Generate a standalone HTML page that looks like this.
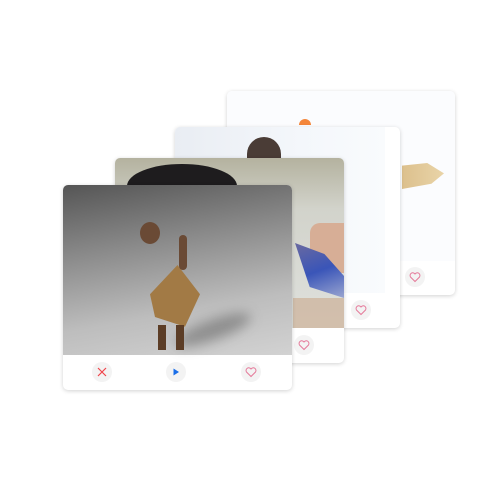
<!DOCTYPE html>
<html><head><style>
body{margin:0;width:500px;height:500px;background:#fff;position:relative;overflow:hidden;font-family:"Liberation Sans",sans-serif}
.c{position:absolute;background:#fff;border-radius:5px;box-shadow:0 1px 4px rgba(0,0,0,.18);overflow:hidden}
.im{position:absolute;left:0;top:0}
.b{position:absolute;width:20px;height:20px;border-radius:50%;background:#f3f3f3}
.b svg{position:absolute;left:4px;top:4px}
</style></head><body>
<div class="c" style="left:227px;top:91px;width:228px;height:204px">
 <div class="im" style="width:228px;height:170px;background:#fbfcfe"></div>
 <div style="position:absolute;left:72px;top:28px;width:12px;height:6px;background:#f4863a;border-radius:6px 6px 0 0"></div>
 <div style="position:absolute;left:175px;top:72px;width:42px;height:26px;background:linear-gradient(90deg,#dcc08d,#e9d4a8);clip-path:polygon(0 10%,60% 0,100% 40%,70% 80%,0 100%)"></div>
 <div class="b" style="left:178px;top:176px"><svg width="12" height="12" viewBox="0 0 12 12"><path d="M6 10.5L1.5 6A2.5 2.5 0 0 1 6 3A2.5 2.5 0 0 1 10.5 6Z" fill="none" stroke="#e57a9a" stroke-width="1"/></svg></div>
</div>
<div class="c" style="left:175px;top:127px;width:225px;height:201px">
 <div class="im" style="width:210px;height:166px;background:linear-gradient(90deg,#e9edf3,#f4f7fb 60%,#f9fbfd)"></div>
 <div style="position:absolute;left:72px;top:10px;width:34px;height:25px;background:#4a3c36;border-radius:17px 17px 0 0"></div>
 <div class="b" style="left:176px;top:173px"><svg width="12" height="12" viewBox="0 0 12 12"><path d="M6 10.5L1.5 6A2.5 2.5 0 0 1 6 3A2.5 2.5 0 0 1 10.5 6Z" fill="none" stroke="#e57a9a" stroke-width="1"/></svg></div>
</div>
<div class="c" style="left:115px;top:158px;width:229px;height:205px">
 <div class="im" style="width:229px;height:170px;background:linear-gradient(180deg,#b4b29f,#d2d3cb 30%,#dfe1dd)"></div>
 <div style="position:absolute;left:12px;top:6px;width:110px;height:22px;background:#1e1c1e;border-radius:55px 55px 0 0/22px 22px 0 0"></div>
 <div style="position:absolute;left:195px;top:65px;width:34px;height:50px;background:#d7ae96;border-radius:10px 0 0 10px"></div>
 <div style="position:absolute;left:180px;top:85px;width:49px;height:55px;background:linear-gradient(160deg,#6a6aa0,#3a55b8 50%,#9aa5d0);clip-path:polygon(0 0,60% 20%,100% 60%,100% 100%,30% 80%)"></div>
 <div style="position:absolute;left:178px;top:140px;width:51px;height:30px;background:#c9a98c;opacity:.6"></div>
 <div class="b" style="left:179px;top:177px"><svg width="12" height="12" viewBox="0 0 12 12"><path d="M6 10.5L1.5 6A2.5 2.5 0 0 1 6 3A2.5 2.5 0 0 1 10.5 6Z" fill="none" stroke="#e57a9a" stroke-width="1"/></svg></div>
</div>
<div class="c" style="left:63px;top:185px;width:229px;height:205px">
 <div class="im" style="width:229px;height:170px;background:linear-gradient(170deg,#555 0%,#8a8a8a 35%,#bdbdbd 70%,#d2d2d2 100%)"></div>
 <div style="position:absolute;left:110px;top:135px;width:80px;height:20px;background:rgba(40,40,40,.35);border-radius:50%;filter:blur(6px);transform:rotate(-20deg)"></div>
 <div style="position:absolute;left:87px;top:80px;width:50px;height:65px;background:#a27a45;clip-path:polygon(55% 0,100% 45%,70% 95%,10% 80%,0 45%)"></div>
 <div style="position:absolute;left:77px;top:37px;width:20px;height:22px;background:#6a4a35;border-radius:50%"></div>
 <div style="position:absolute;left:116px;top:50px;width:8px;height:35px;background:#6a4a35;border-radius:4px"></div>
 <div style="position:absolute;left:95px;top:140px;width:8px;height:25px;background:#5c3d26"></div>
 <div style="position:absolute;left:113px;top:140px;width:8px;height:25px;background:#5c3d26"></div>
 <div class="b" style="left:29px;top:177px"><svg width="12" height="12" viewBox="0 0 12 12"><path d="M2 2L10 10M10 2L2 10" stroke="#f0444a" stroke-width="1.2"/></svg></div>
 <div class="b" style="left:103px;top:177px"><svg width="12" height="12" viewBox="0 0 12 12"><path d="M3.5 2.5L9 6L3.5 9.5Z" fill="#1a6ee8"/></svg></div>
 <div class="b" style="left:178px;top:177px"><svg width="12" height="12" viewBox="0 0 12 12"><path d="M6 10.5L1.5 6A2.5 2.5 0 0 1 6 3A2.5 2.5 0 0 1 10.5 6Z" fill="none" stroke="#e57a9a" stroke-width="1"/></svg></div>
</div>
</body></html>
